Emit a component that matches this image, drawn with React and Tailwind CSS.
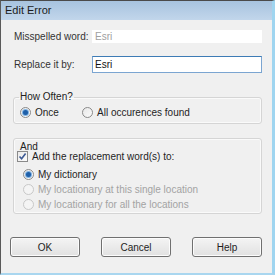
import React from 'react';

function Radio({ checked = false, disabled = false }) {
  return (
    <span
      className={`relative flex h-[11px] w-[11px] shrink-0 items-center justify-center rounded-full border ${
        disabled
          ? 'border-[#c8c8c8] bg-[#f4f4f4]'
          : 'border-[#8a8a8a] bg-gradient-to-br from-[#e8e8e8] to-[#fbfbfb]'
      }`}
    >
      {checked && (
        <span className="h-[5px] w-[5px] rounded-full bg-[#1f5fa8] shadow-[0_0_0_1px_#7fb2e3]" />
      )}
    </span>
  );
}

function Checkbox({ checked = false }) {
  return (
    <span className="flex h-[11px] w-[11px] shrink-0 items-center justify-center border border-[#8a8a8a] bg-gradient-to-br from-[#eaeaea] to-[#fcfcfc]">
      {checked && (
        <svg width="9" height="9" viewBox="0 0 9 9">
          <path d="M1.5 4.5 L3.6 6.8 L7.6 1.5" fill="none" stroke="#3d5a94" strokeWidth="1.6" />
        </svg>
      )}
    </span>
  );
}

function Button({ children }) {
  return (
    <button className="h-[20px] w-[70px] rounded-[3px] border border-[#707070] bg-gradient-to-b from-[#f4f4f4] to-[#e1e1e1] text-[10px] text-[#1e1e1e] shadow-[inset_0_0_0_1px_#fcfcfc]">
      {children}
    </button>
  );
}

export default function App() {
  return (
    <div className="flex h-[275px] w-[275px] flex-col border-l border-t border-b-2 border-r-[3px] border-l-[#5a5a5a] border-t-[#4a4a4a] border-b-[#a9d6ef] border-r-[#9fd5f0] bg-[#f0f0f0] font-['Liberation_Sans',Arial,sans-serif] text-[10px] text-[#1e1e1e]">
      <div className="flex h-[19px] shrink-0 items-center bg-gradient-to-b from-[#a7c3df] to-[#c2d6eb] pl-[4px] text-[11px] text-[#1a1a1a]">
        Edit Error
      </div>

      <div className="flex flex-1 flex-col pl-[12px] pr-[10px]">
        <div className="mt-[10px] flex h-[13px] items-center">
          <span className="w-[79px] pl-[1px] text-[#333]">Misspelled word:</span>
          <div className="flex h-full flex-1 items-center bg-white pl-[3px] text-[#a0a0a0]">Esri</div>
        </div>

        <div className="mt-[13px] flex h-[17px] items-center">
          <span className="w-[79px] pl-[1px] text-[#333]">Replace it by:</span>
          <div className="flex h-full flex-1 items-center border border-[#7ba5d1] border-t-[#3d7bb5] bg-white pl-[2px] text-[#111]">
            Esri
          </div>
        </div>

        <fieldset className="mt-[18px] rounded-[3px] border border-[#d5d5d5] pb-[4px] shadow-[inset_0_0_0_1px_#fafafa]">
          <legend className="ml-[5px] px-[1px] leading-[12px] text-[#222]">How Often?</legend>
          <div className="mt-[2px] flex h-[14px] items-center pl-[6px]">
            <div className="flex w-[62px] items-center gap-[4px]">
              <Radio checked />
              <span>Once</span>
            </div>
            <div className="flex items-center gap-[4px]">
              <Radio />
              <span>All occurences found</span>
            </div>
          </div>
        </fieldset>

        <div className="mt-[14px] flex flex-col rounded-[3px] border border-[#d5d5d5] pb-[1px] shadow-[inset_0_0_0_1px_#fafafa]">
          <div className="mt-[3px] h-[9px] pl-[6px] leading-[10px] text-[#222]">And</div>
          <div className="flex h-[11px] items-center gap-[4px] pl-[3px]">
            <Checkbox checked />
            <span>Add the replacement word(s) to:</span>
          </div>
          <div className="mt-[5px] flex flex-col pl-[9px]">
            <div className="flex h-[15px] items-center gap-[4px]">
              <Radio checked />
              <span>My dictionary</span>
            </div>
            <div className="flex h-[15px] items-center gap-[4px] text-[#a3a3a3]">
              <Radio disabled />
              <span>My locationary at this single location</span>
            </div>
            <div className="flex h-[15px] items-center gap-[4px] text-[#a3a3a3]">
              <Radio disabled />
              <span>My locationary for all the locations</span>
            </div>
          </div>
        </div>

        <div className="mt-[23px] flex gap-[21px] pl-[-2px] -ml-[3px]">
          <Button>OK</Button>
          <Button>Cancel</Button>
          <Button>Help</Button>
        </div>
      </div>
    </div>
  );
}
